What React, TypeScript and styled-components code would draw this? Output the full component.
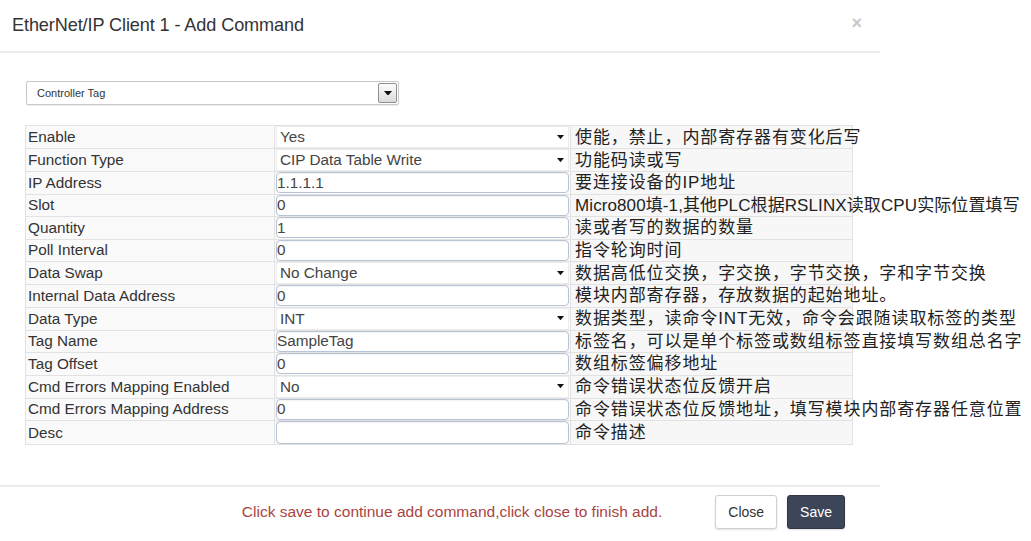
import styled, { createGlobalStyle } from "styled-components";

const GlobalStyle = createGlobalStyle`
  html, body {
    margin: 0;
    padding: 0;
    background: #ffffff;
  }
  body {
    font-family: "Liberation Sans", Arial, sans-serif;
    color: #333333;
  }
`;

type Row = {
  label: string;
  value: string;
  kind: "select" | "input";
  note: string;
  tall?: boolean;
  tight?: boolean;
};

const ROWS: Row[] = [
  { label: "Enable", value: "Yes", kind: "select", note: "使能，禁止，内部寄存器有变化后写" },
  { label: "Function Type", value: "CIP Data Table Write", kind: "select", note: "功能码读或写" },
  { label: "IP Address", value: "1.1.1.1", kind: "input", note: "要连接设备的IP地址" },
  { label: "Slot", value: "0", kind: "input", note: "Micro800填-1,其他PLC根据RSLINX读取CPU实际位置填写", tight: true },
  { label: "Quantity", value: "1", kind: "input", note: "读或者写的数据的数量" },
  { label: "Poll Interval", value: "0", kind: "input", note: "指令轮询时间" },
  { label: "Data Swap", value: "No Change", kind: "select", note: "数据高低位交换，字交换，字节交换，字和字节交换" },
  { label: "Internal Data Address", value: "0", kind: "input", note: "模块内部寄存器，存放数据的起始地址。" },
  { label: "Data Type", value: "INT", kind: "select", note: "数据类型，读命令INT无效，命令会跟随读取标签的类型" },
  { label: "Tag Name", value: "SampleTag", kind: "input", note: "标签名，可以是单个标签或数组标签直接填写数组总名字" },
  { label: "Tag Offset", value: "0", kind: "input", note: "数组标签偏移地址" },
  { label: "Cmd Errors Mapping Enabled", value: "No", kind: "select", note: "命令错误状态位反馈开启" },
  { label: "Cmd Errors Mapping Address", value: "0", kind: "input", note: "命令错误状态位反馈地址，填写模块内部寄存器任意位置" },
  { label: "Desc", value: "", kind: "input", note: "命令描述", tall: true },
];

// ─── Styled Components ───────────────────────────────────────────────────────

const StyledModal = styled.div`
  width: 880px;
  background: #ffffff;
`;

const StyledHeader = styled.div`
  display: flex;
  align-items: center;
  justify-content: space-between;
  height: 51px;
  padding: 0 18px 0 12px;
  border-bottom: 2px solid #ececec;
`;

const StyledTitle = styled.h4`
  margin: 0;
  font-size: 18.1px;
  font-weight: 400;
  color: #333333;
  letter-spacing: -0.1px;
`;

const StyledCloseX = styled.span`
  font-size: 18px;
  font-weight: 700;
  color: #c8c8c8;
  line-height: 1;
  margin-top: -6px;
`;

const StyledBody = styled.div`
  padding: 28px 27px 40px 25px;
`;

const StyledSourceSelect = styled.div`
  display: flex;
  align-items: center;
  justify-content: space-between;
  width: 360px;
  height: 22px;
  margin-left: 1px;
  padding: 0 1px 0 10px;
  border: 1px solid #c9c9c9;
  border-radius: 2px;
  font-size: 11px;
  color: #333333;
  box-sizing: content-box;
  box-shadow: 0 1px 1px rgba(0, 0, 0, 0.08);
`;

const StyledDropButton = styled.div`
  display: flex;
  align-items: center;
  justify-content: center;
  width: 17px;
  height: 18px;
  border: 1px solid #8f8f8f;
  border-radius: 2px;
  background: linear-gradient(#fdfdfd, #dadada);
`;

const StyledTable = styled.table`
  width: 828px;
  margin-top: 20px;
  border-collapse: collapse;
  table-layout: fixed;
`;

const StyledRow = styled.tr<{ $tall?: boolean }>`
  height: ${(p) => (p.$tall ? "24px" : "22.5px")};
`;

const StyledLabelCell = styled.td`
  width: 249px;
  padding: 0 0 0 2px;
  border: 1px solid #e2e2e2;
  background: #fafafa;
  font-size: 15.3px;
  color: #333333;
  white-space: nowrap;
  box-sizing: border-box;
`;

const StyledFieldCell = styled.td`
  width: 296px;
  padding: 0;
  border: 1px solid #e2e2e2;
  background: #fafafa;
  box-sizing: border-box;
`;

const StyledNoteCell = styled.td<{ $tight?: boolean }>`
  padding: 0 0 0 4px;
  border: 1px solid #e2e2e2;
  background: #f7f7f7;
  font-family: "Liberation Sans", "Noto Sans CJK SC", sans-serif;
  font-size: 17px;
  line-height: 17px;
  color: #222222;
  white-space: nowrap;
  overflow: visible;
  letter-spacing: ${(p) => (p.$tight ? "0.1px" : "0.9px")};
`;

const StyledInput = styled.div<{ $tall?: boolean }>`
  display: flex;
  align-items: center;
  height: ${(p) => (p.$tall ? "21px" : "19px")};
  margin: 0 1px;
  padding: 0;
  border: 1px solid #b7c3d6;
  border-radius: 4px;
  background: #ffffff;
  font-size: 15.3px;
  color: #444444;
  box-shadow: inset 0 1px 1px rgba(0, 0, 0, 0.05);
`;

const StyledSelect = styled.div`
  display: flex;
  align-items: center;
  justify-content: space-between;
  height: 20px;
  margin: 0 1px;
  padding: 0 4px 0 3px;
  border: 1px solid #ececec;
  background: #ffffff;
  font-size: 15.3px;
  color: #444444;
`;

const StyledFooter = styled.div`
  display: flex;
  align-items: center;
  justify-content: flex-end;
  height: 50px;
  padding: 0 35px 0 0;
  border-top: 2px solid #ececec;
`;

const StyledMessage = styled.span`
  margin-right: 53px;
  font-size: 15.5px;
  color: #a94442;
`;

const StyledButton = styled.button<{ $primary?: boolean }>`
  height: 34px;
  padding: 0 12px;
  margin-left: ${(p) => (p.$primary ? "10px" : "0")};
  border: 1px solid ${(p) => (p.$primary ? "#2f3745" : "#d0d0d0")};
  border-radius: 3px;
  background: ${(p) => (p.$primary ? "#3d4658" : "#ffffff")};
  color: ${(p) => (p.$primary ? "#ffffff" : "#333333")};
  font-family: "Liberation Sans", Arial, sans-serif;
  font-size: 14px;
  box-shadow: 0 1px 2px rgba(0, 0, 0, 0.12);
`;

// ─── Helpers ─────────────────────────────────────────────────────────────────

const Caret = ({ size = 7 }: { size?: number }) => (
  <svg width={size} height={size * 0.6} viewBox="0 0 10 6">
    <path d="M0 0 L10 0 L5 6 Z" fill="#111111" />
  </svg>
);

// ─── Component ───────────────────────────────────────────────────────────────

const App = () => {
  return (
    <>
      <GlobalStyle />
      <StyledModal>
        <StyledHeader>
          <StyledTitle>EtherNet/IP Client 1 - Add Command</StyledTitle>
          <StyledCloseX>×</StyledCloseX>
        </StyledHeader>

        <StyledBody>
          <StyledSourceSelect>
            <span>Controller Tag</span>
            <StyledDropButton>
              <Caret size={8} />
            </StyledDropButton>
          </StyledSourceSelect>

          <StyledTable>
            <tbody>
              {ROWS.map((row) => (
                <StyledRow key={row.label} $tall={row.tall}>
                  <StyledLabelCell>{row.label}</StyledLabelCell>
                  <StyledFieldCell>
                    {row.kind === "select" ? (
                      <StyledSelect>
                        <span>{row.value}</span>
                        <Caret />
                      </StyledSelect>
                    ) : (
                      <StyledInput $tall={row.tall}>{row.value}</StyledInput>
                    )}
                  </StyledFieldCell>
                  <StyledNoteCell $tight={row.tight}>{row.note}</StyledNoteCell>
                </StyledRow>
              ))}
            </tbody>
          </StyledTable>
        </StyledBody>

        <StyledFooter>
          <StyledMessage>
            Click save to continue add command,click close to finish add.
          </StyledMessage>
          <StyledButton>Close</StyledButton>
          <StyledButton $primary>Save</StyledButton>
        </StyledFooter>
      </StyledModal>
    </>
  );
};

App.displayName = "App";
export default App;
